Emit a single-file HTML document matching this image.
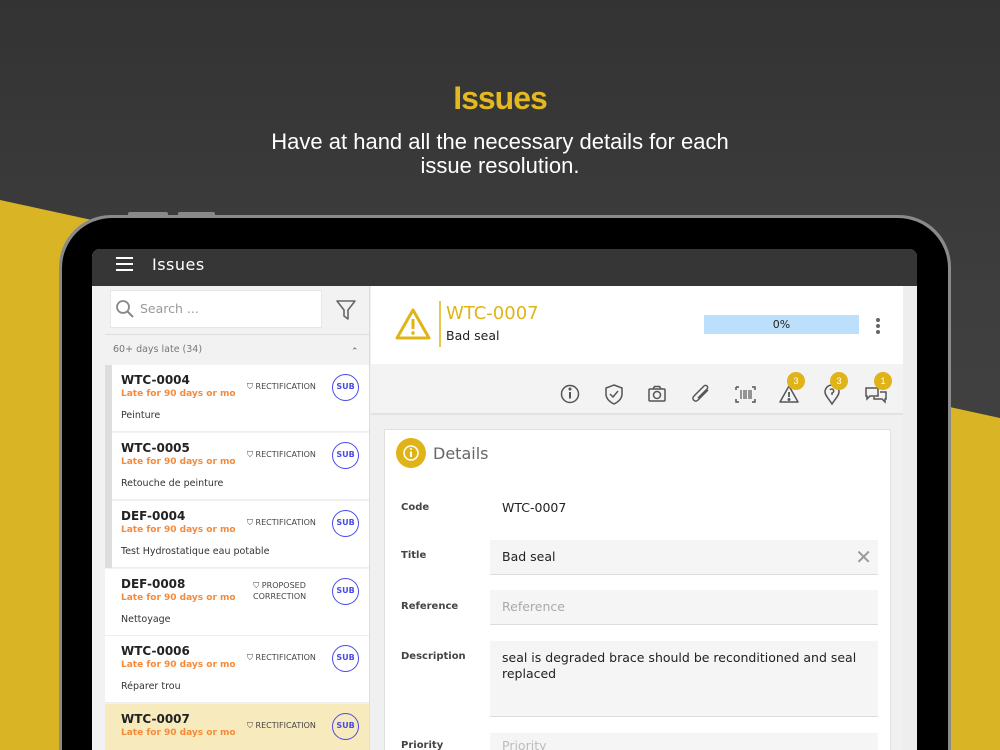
<!DOCTYPE html>
<html><head><meta charset="utf-8"><style>
*{margin:0;padding:0;box-sizing:border-box}
html,body{width:1000px;height:750px;overflow:hidden}
body{font-family:"Liberation Sans",sans-serif;background:#3a3a3a}
#w{position:relative;width:1000px;height:750px;overflow:hidden;background:linear-gradient(#333 0%,#3e3e3e 40%,#474747 100%)}
.abs{position:absolute}
h1{position:absolute;top:80px;width:100%;text-align:center;color:#e3b820;font-size:32px;font-weight:bold;letter-spacing:-1px}
.sub{position:absolute;top:130px;width:100%;text-align:center;color:#fff;font-size:22px;line-height:24px}
.t{font-family:"DejaVu Sans","Liberation Sans",sans-serif}
.row{position:absolute;left:105px;width:264px;height:67px;background:#fff;border-bottom:1px solid #eee}
.row .c{position:absolute;left:16px;top:8px;font-size:12px;font-weight:bold;color:#222}
.row .l{position:absolute;left:16px;top:24px;font-size:9px;font-weight:bold;color:#f58a3a;width:114px;overflow:hidden;white-space:nowrap;letter-spacing:0}
.row .d{position:absolute;left:16px;top:45px;font-size:9.5px;color:#333}
.row .k{position:absolute;left:142px;top:17px;font-size:8px;color:#444;text-align:center}
.row .s{position:absolute;left:227px;top:9px;width:27px;height:27px;border:1.5px solid #4a4ae8;border-radius:50%;color:#4a4ae8;font-size:8px;font-weight:bold;text-align:center;line-height:24px}
.lab{position:absolute;left:401px;font-size:10px;font-weight:bold;color:#444}
.fld{position:absolute;left:490px;width:388px;background:#f5f5f5;border-bottom:1px solid #ddd;font-size:12.5px;color:#222;padding-left:12px}
.badge{position:absolute;width:18px;height:18px;border-radius:50%;background:#e0b418;color:#fff;font-size:9px;text-align:center;line-height:18px}
</style></head><body><div id="w">
<svg class="abs" style="left:0;top:0" width="1000" height="750"><polygon points="0,200 1000,418 1000,750 0,750" fill="#d9b526"/></svg>
<h1>Issues</h1>
<div class="sub">Have at hand all the necessary details for each<br>issue resolution.</div>
<div class="abs" style="left:128px;top:212px;width:40px;height:6px;background:#888;border-radius:2px"></div>
<div class="abs" style="left:178px;top:212px;width:37px;height:6px;background:#888;border-radius:2px"></div>
<div class="abs" style="left:59px;top:215px;width:892px;height:535px;background:#8a8a8a;border-radius:52px 52px 0 0"></div>
<div class="abs" style="left:62px;top:218px;width:886px;height:532px;background:#000;border-radius:50px 50px 0 0"></div>
<div class="abs" style="left:92px;top:249px;width:825px;height:501px;background:#f0f0f0;border-radius:8px 8px 0 0;overflow:hidden">
 <div class="abs" style="left:0;top:0;width:825px;height:37px;background:#363636"></div>
</div>
<div class="abs" style="left:116px;top:257px;width:17px;height:2px;background:#fff;box-shadow:0 6px 0 #fff,0 12px 0 #fff"></div>
<div class="abs t" style="left:152px;top:255px;color:#fff;font-size:16px;letter-spacing:.5px">Issues</div>
<div class="abs" style="left:92px;top:286px;width:278px;height:464px;background:#f2f2f2;border-right:1px solid #ddd"></div>
<div class="abs" style="left:110px;top:290px;width:212px;height:38px;background:#fff;border:1px solid #e5e5e5"></div>
<svg class="abs" style="left:115px;top:299px" width="20" height="20"><circle cx="8" cy="8" r="6" stroke="#888" stroke-width="1.8" fill="none"/><line x1="12.5" y1="12.5" x2="18" y2="18" stroke="#888" stroke-width="2"/></svg>
<div class="abs t" style="left:140px;top:301px;font-size:12.5px;color:#999">Search ...</div>
<svg class="abs" style="left:335px;top:299px" width="22" height="22"><path d="M2 2 H20 L13 11 V20 L9 17 V11 Z" fill="none" stroke="#666" stroke-width="1.6" stroke-linejoin="round"/></svg>
<div class="abs" style="left:105px;top:334px;width:264px;height:1px;background:#ddd"></div>
<div class="abs t" style="left:113px;top:344px;font-size:9.5px;color:#777">60+ days late (34)</div>
<div class="abs" style="left:351px;top:346px;font-size:9px;color:#666">&#8963;</div>
<div class="abs" style="left:105px;top:365px;width:7px;height:203px;background:#ddd"></div>
<div class="row t" style="top:365px;left:112px;width:257px"><div class="c" style="left:9px">WTC-0004</div><div class="l" style="left:9px">Late for 90 days or more</div><div class="d" style="left:9px">Peinture</div><div class="k" style="left:135px">⛉ RECTIFICATION</div><div class="s" style="left:220px">SUB</div></div>
<div class="row t" style="top:433px;left:112px;width:257px"><div class="c" style="left:9px">WTC-0005</div><div class="l" style="left:9px">Late for 90 days or more</div><div class="d" style="left:9px">Retouche de peinture</div><div class="k" style="left:135px">⛉ RECTIFICATION</div><div class="s" style="left:220px">SUB</div></div>
<div class="row t" style="top:501px;left:112px;width:257px"><div class="c" style="left:9px">DEF-0004</div><div class="l" style="left:9px">Late for 90 days or more</div><div class="d" style="left:9px">Test Hydrostatique eau potable</div><div class="k" style="left:135px">⛉ RECTIFICATION</div><div class="s" style="left:220px">SUB</div></div>
<div class="row t" style="top:569px"><div class="c">DEF-0008</div><div class="l">Late for 90 days or more</div><div class="d">Nettoyage</div><div class="k" style="left:148px;top:11px;line-height:11px">⛉ PROPOSED<br>CORRECTION</div><div class="s">SUB</div></div>
<div class="row t" style="top:636px"><div class="c">WTC-0006</div><div class="l">Late for 90 days or more</div><div class="d">Réparer trou</div><div class="k">⛉ RECTIFICATION</div><div class="s">SUB</div></div>
<div class="row t" style="top:704px;height:46px;border:none;background:#f7ebbe"><div class="c">WTC-0007</div><div class="l">Late for 90 days or more</div><div class="k">⛉ RECTIFICATION</div><div class="s">SUB</div></div>
<div class="abs" style="left:371px;top:286px;width:532px;height:78px;background:#fff"></div>
<svg class="abs" style="left:394px;top:307px" width="38" height="34"><path d="M19 3 L35 31 H3 Z" fill="none" stroke="#e0b418" stroke-width="3" stroke-linejoin="round"/><rect x="17.5" y="12" width="3" height="10" fill="#e0b418"/><circle cx="19" cy="26" r="1.8" fill="#e0b418"/></svg>
<div class="abs" style="left:439px;top:301px;width:2px;height:46px;background:#e8c84a"></div>
<div class="abs t" style="left:446px;top:303px;font-size:18px;color:#e0b418">WTC-0007</div>
<div class="abs t" style="left:446px;top:328px;font-size:12.5px;color:#222">Bad seal</div>
<div class="abs t" style="left:704px;top:315px;width:155px;height:19px;background:#bcdffb;text-align:center;font-size:11px;line-height:19px;color:#222">0%</div>
<div class="abs" style="left:876px;top:318px;width:4px;height:4px;background:#666;border-radius:50%;box-shadow:0 6px 0 #666,0 12px 0 #666"></div>
<div class="abs" style="left:371px;top:364px;width:532px;height:51px;background:#f3f3f3;border-bottom:2px solid #e2e2e2"></div>
<svg class="abs" style="left:558px;top:382px" width="340" height="26" fill="none" stroke="#555" stroke-width="1.5">
<circle cx="12" cy="12" r="8.5"/><line x1="12" y1="10" x2="12" y2="16.5" stroke-width="2"/><circle cx="12" cy="7" r=".8" fill="#555"/>
<path d="M56 3 L64 6 V12 C64 17 60 20 56 22 C52 20 48 17 48 12 V6 Z"/><path d="M52 12 L55 15 L60 9"/>
<rect x="91" y="7" width="16" height="12" rx="1"/><circle cx="99" cy="13" r="3.5"/><path d="M95 7 L96.5 4.5 H101.5 L103 7"/>
<path d="M150 8 L140 18 C137 21 133 17 136 14 L146 4 C148 2 151 5 149 7 L140 16"/>
<path d="M178 5 V8 M178 5 H181 M194 5 H197 V8 M178 17 V20 H181 M197 17 V20 H194"/><path d="M183 8 V17 M186 8 V17 M188 8 V17 M191 8 V17 M193 8 V17" stroke-width="1.2"/>
<path d="M231 4 L240 20 H222 Z" stroke-linejoin="round"/><line x1="231" y1="10" x2="231" y2="15" stroke-width="1.8"/><circle cx="231" cy="17.5" r=".7" fill="#555"/>
<path d="M274 22 C270 16 267 13 267 10 A7 7 0 0 1 281 10 C281 13 278 16 274 22 Z"/><path d="M272 8 A2 2 0 1 1 274 11 V13"/>
<path d="M308 6 H320 V14 H312 L309 17 V14 H308 Z"/><path d="M322 10 H328 V17 H327 V20 L324 17 H316 V15"/>
</svg>
<div class="badge" style="left:787px;top:372px">3</div>
<div class="badge" style="left:830px;top:372px">3</div>
<div class="badge" style="left:874px;top:372px">1</div>
<div class="abs" style="left:903px;top:286px;width:14px;height:464px;background:#eee"></div>
<div class="abs" style="left:384px;top:429px;width:507px;height:321px;background:#fff;border:1px solid #e0e0e0;border-bottom:none"></div>
<div class="abs" style="left:396px;top:438px;width:30px;height:30px;border-radius:50%;background:#e0b418"></div>
<svg class="abs" style="left:402px;top:444px" width="18" height="18"><circle cx="9" cy="9" r="7" stroke="#fff" stroke-width="1.5" fill="none"/><line x1="9" y1="7.5" x2="9" y2="13" stroke="#fff" stroke-width="2"/><circle cx="9" cy="5" r="1" fill="#fff"/></svg>
<div class="abs t" style="left:433px;top:444px;font-size:16px;color:#666">Details</div>
<div class="lab t" style="top:502px">Code</div>
<div class="abs t" style="left:502px;top:500px;font-size:12.5px;color:#222">WTC-0007</div>
<div class="lab t" style="top:550px">Title</div>
<div class="fld t" style="top:540px;height:35px;line-height:34px">Bad seal<span style="position:absolute;right:6px;top:0;font-size:20px;color:#999">✕</span></div>
<div class="lab t" style="top:601px">Reference</div>
<div class="fld t" style="top:590px;height:35px;line-height:34px;color:#aaa">Reference</div>
<div class="lab t" style="top:651px">Description</div>
<div class="fld t" style="top:641px;height:76px;padding-top:9px;line-height:16px">seal is degraded brace should be reconditioned and seal<br>replaced</div>
<div class="lab t" style="top:740px;height:10px;overflow:hidden">Priority</div>
<div class="fld t" style="top:733px;height:17px;line-height:26px;color:#bbb;border:none;overflow:hidden">Priority</div>
</div></body></html>
